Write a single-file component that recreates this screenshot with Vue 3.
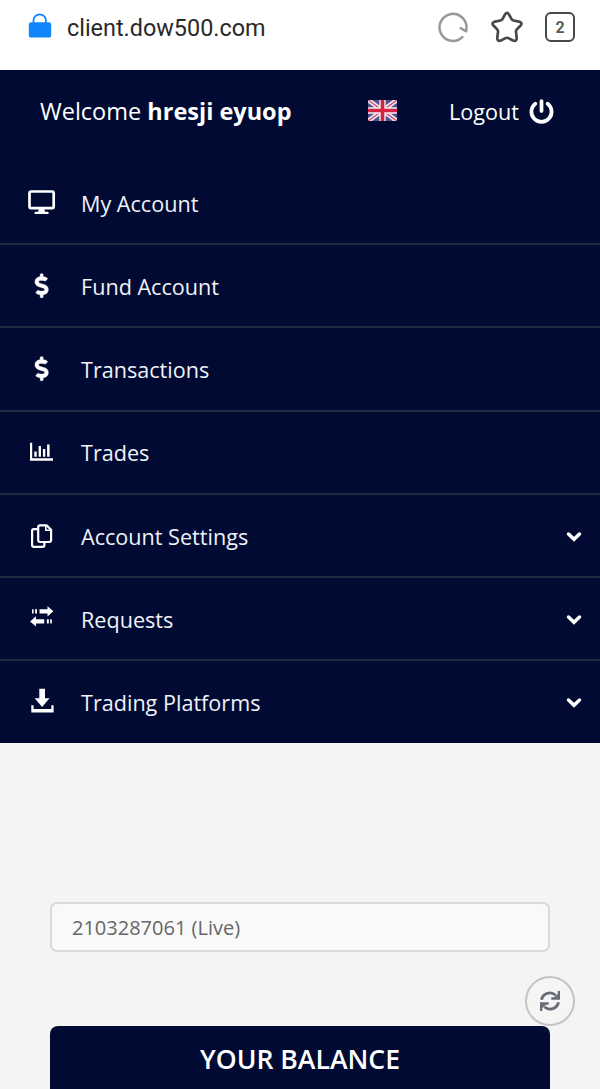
<template>
  <div class="page">
    <!-- browser bar -->
    <div class="browser-bar">
      <svg class="lock" viewBox="0 0 24 26">
        <path d="M5.5 11V7.5a6.2 6.2 0 0 1 12.4 0V11" fill="none" stroke="#0f87fb" stroke-width="1.8" />
        <rect x="0.8" y="9.3" width="22.4" height="15.2" rx="2.6" fill="#0f87fb" />
      </svg>
      <span class="url">client.dow500.com</span>
      <div class="browser-icons">
        <svg class="reload" viewBox="0 0 32 32" fill="none" stroke="#999" stroke-width="2.5" stroke-linecap="round">
          <path d="M25.4 26.1A13.5 13.5 0 1 1 29.5 17L29.2 20.3L23.6 17.2" stroke-linejoin="round" />
        </svg>
        <svg class="star" viewBox="0 0 32 32" fill="none" stroke="#484848" stroke-width="2.7" stroke-linejoin="round">
          <path d="M14.2 3.2Q16 0.4 17.8 3.2L20.4 7.9Q21.1 9.2 22.6 9.5L28 10.6Q32 11.7 29.4 14.7L25.8 18.4Q24.8 19.5 25 21L25.7 26.6Q26 31 22.1 29.5L17.4 27.1Q16 26.4 14.6 27.1L9.9 29.5Q6 31 6.3 26.6L7 21Q7.2 19.5 6.2 18.4L2.6 14.7Q0 11.7 4 10.6L9.4 9.5Q10.9 9.2 11.6 7.9Z" />
        </svg>
        <span class="tab-count">2</span>
      </div>
    </div>

    <!-- header and menu -->
    <header class="header">
      <p class="welcome">Welcome <strong>{{ userName }}</strong></p>
      <svg class="flag" viewBox="0 0 29 21">
        <rect width="29" height="21" fill="#50508e" />
        <path d="M0 0L29 21M29 0L0 21" stroke="#f2eaf5" stroke-width="4.6" />
        <path d="M0 0L29 21M29 0L0 21" stroke="#ce4a68" stroke-width="1.4" />
        <path d="M14.5 0V21M0 10.5H29" stroke="#f7edf3" stroke-width="6.4" />
        <path d="M14.5 0V21M0 10.5H29" stroke="#d32340" stroke-width="3.6" />
      </svg>
      <a class="logout">
        <span>Logout</span>
        <svg viewBox="0 0 24 24" fill="none" stroke="#fff" stroke-width="3.6" stroke-linecap="round">
          <path d="M6.1 4.5A9.7 9.7 0 1 0 17.9 4.5" />
          <path d="M12 2V11.5" />
        </svg>
      </a>
    </header>

    <nav class="menu">
      <a v-for="item in menuItems" :key="item.label" class="menu-item">
        <svg class="menu-icon" viewBox="0 0 30 30" fill="#fff">
          <g v-if="item.icon === 'desktop'">
            <rect x="2.5" y="3.5" width="24.2" height="16.6" rx="1.6" fill="none" stroke="#fff" stroke-width="2.7" />
            <path d="M12 20.6H17.2L18 23.7H20.5A1.2 1.2 0 0 1 20.5 26.1H8.7A1.2 1.2 0 0 1 8.7 23.7H11.2Z" />
          </g>
          <g v-else-if="item.icon === 'dollar'" transform="translate(7.9 2.7) scale(0.0469)">
            <path stroke="#fff" stroke-width="8" d="M209.2 233.4l-108-31.6C88.7 198.2 80 186.5 80 173.5c0-16.3 13.2-29.5 29.5-29.5h66.3c12.2 0 24.2 3.7 34.2 10.5 6.1 4.1 14.3 3.1 19.5-2l34.8-34c7.1-6.9 6.1-18.4-1.8-24.5C238 74.8 207.4 64.1 176 64V16c0-8.8-7.2-16-16-16h-32c-8.8 0-16 7.2-16 16v48h-2.5C45.8 64-5.4 118.7.5 183.6c4.2 46.1 39.4 83.6 83.8 96.6l102.5 30c12.5 3.7 21.2 15.3 21.2 28.3 0 16.3-13.2 29.5-29.5 29.5h-66.3C100 368 88 364.3 78 357.5c-6.1-4.1-14.3-3.1-19.5 2l-34.8 34c-7.1 6.9-6.1 18.4 1.8 24.5 24.5 19.2 55.1 29.9 86.5 30v48c0 8.8 7.2 16 16 16h32c8.8 0 16-7.2 16-16v-48.2c46.6-.9 90.3-28.6 105.7-72.7 21.5-61.6-14.6-124.8-72.5-141.7z" />
          </g>
          <g v-else-if="item.icon === 'chart'">
            <path d="M3 5.8H5.2V21.3H26V23.7H3Z" />
            <path d="M7.3 14.6h2.4v5.1H7.3zM11.6 8.9H14v10.8h-2.4zM15.9 12.1h2.4v7.6h-2.4zM20.1 7.6h2.5v12.1h-2.5z" />
          </g>
          <g v-else-if="item.icon === 'copy'" fill="none" stroke="#fff" stroke-width="2.2" stroke-linejoin="round">
            <path d="M10.6 8.2H6.8Q5.1 8.2 5.1 9.9V24.1Q5.1 25.9 6.8 25.9H15.6Q17.4 25.9 17.4 24.1V21.2" />
            <path d="M13 4.3H19.5L24.1 8.8V19.1Q24.1 21 22.3 21H13Q11.2 21 11.2 19.1V6.1Q11.2 4.3 13 4.3Z" />
            <path d="M18.8 4.4V9.2H24" stroke-width="1.6" />
          </g>
          <g v-else-if="item.icon === 'arrows'">
            <path d="M5 5.2h1.6v4.2H5zM8.1 5.2H10v4.2H8.1zM12.5 5.2H20.5V2.2L26.4 7.3L20.5 12.4V9.4H12.5Z" />
            <path d="M24.8 15.3h-1.6v4.2h1.6zM21.8 15.3h-1.9v4.2h1.9zM17.2 15.3H9V12.3L3.1 17.4L9 22.5V19.5H17.2Z" />
          </g>
          <g v-else>
            <path d="M12.3 1.8H18V11.2H22.5L15.1 19.9L7.7 11.2H12.3Z" />
            <path d="M4.3 18.2H6.6V21.9H24.3V18.2H26.6V25.4H4.3Z" />
          </g>
        </svg>
        <span class="menu-label">{{ item.label }}</span>
        <svg v-if="item.hasChildren" class="chevron" viewBox="0 0 16 12">
          <path d="M2.5 4L8 9.3L13.5 4" fill="none" stroke="#fff" stroke-width="3.5" stroke-linecap="round" />
        </svg>
      </a>
    </nav>

    <!-- account -->
    <main class="content">
      <div class="account-select">{{ account }}</div>
      <section class="balance">
        <h2>YOUR BALANCE</h2>
        <button class="refresh" type="button" aria-label="Refresh">
          <svg viewBox="0 0 20 20">
            <path d="M1.5 8.8A8.5 8.5 0 0 1 15.6 4.2M18.5 11.2A8.5 8.5 0 0 1 4.4 15.8" fill="none" stroke="#686c76" stroke-width="2.9" />
            <path d="M20 0V8.7H11.3V6.3H14L17.7 3V0ZM0 20V11.3H8.7V13.7H6L2.3 17V20Z" fill="#686c76" />
          </svg>
        </button>
      </section>
    </main>
  </div>
</template>

<script setup>
import { ref } from 'vue'

const userName = ref('hresji eyuop')
const account = ref('2103287061 (Live)')

const menuItems = [
  { label: 'My Account', icon: 'desktop' },
  { label: 'Fund Account', icon: 'dollar' },
  { label: 'Transactions', icon: 'dollar' },
  { label: 'Trades', icon: 'chart' },
  { label: 'Account Settings', icon: 'copy', hasChildren: true },
  { label: 'Requests', icon: 'arrows', hasChildren: true },
  { label: 'Trading Platforms', icon: 'download', hasChildren: true }
]
</script>

<style>
body {
  background-color: #f4f4f4;
}
</style>

<style scoped>
.page {
  height: 1089px;
  overflow: hidden;
  display: flex;
  flex-direction: column;
  font-family: "Open Sans", "Noto Sans", sans-serif;
  background-color: #f4f4f4;
}

.browser-bar {
  height: 70px;
  flex-shrink: 0;
  box-sizing: border-box;
  padding: 0 25px 16px 28px;
  display: flex;
  align-items: center;
  background-color: #fff;
}

.lock {
  width: 24px;
  height: 26px;
  margin-top: -2px;
}

.url {
  margin-left: 15px;
  font-family: Roboto, sans-serif;
  font-size: 23.4px;
  line-height: 30px;
  padding-top: 1px;
  color: #292929;
}

.browser-icons {
  margin-left: auto;
  display: flex;
  align-items: center;
  gap: 22px;
}

.reload,
.star {
  width: 32px;
  height: 32px;
}

.tab-count {
  width: 30px;
  height: 30px;
  box-sizing: border-box;
  border: 2.5px solid #484848;
  border-radius: 6px;
  text-align: center;
  font-family: Roboto, sans-serif;
  font-size: 16px;
  font-weight: 700;
  line-height: 27px;
  color: #5c5c5c;
}

.header {
  height: 92px;
  flex-shrink: 0;
  box-sizing: border-box;
  padding: 0 46px 10px 40px;
  display: flex;
  align-items: center;
  color: #fff;
  background-color: #000a32;
}

.welcome {
  width: 328px;
  margin: 0;
  font-size: 23.5px;
  white-space: nowrap;
}

.flag {
  width: 29px;
  height: 21px;
  margin-top: -2px;
}

.logout {
  margin-left: auto;
  display: flex;
  align-items: center;
  gap: 10px;
  font-size: 21.6px;
}

.logout svg {
  width: 25px;
  height: 25px;
}

.menu {
  flex-shrink: 0;
  display: grid;
  grid-template-rows: 83px repeat(5, 83.3px) 81.5px;
  background-color: #000a32;
}

.menu-item {
  padding: 0 18px 0 27px;
  display: flex;
  align-items: center;
  color: #f0f2f8;
  border-bottom: 2px solid #202941;
}

.menu-item:last-child {
  border-bottom: none;
}

.menu-icon {
  width: 30px;
  height: 30px;
}

.menu-label {
  margin-left: 24px;
  padding-top: 1px;
  font-size: 21.6px;
}

.chevron {
  width: 16px;
  height: 12px;
  margin-left: auto;
}

.content {
  padding: 159px 50px 0;
}

.account-select {
  height: 50px;
  box-sizing: border-box;
  padding: 0 20px;
  border: 2px solid #dadada;
  border-radius: 7px;
  font-size: 20px;
  line-height: 47px;
  color: #666;
  background-color: #f9f9f9;
}

.balance {
  position: relative;
  height: 80px;
  margin-top: 74.5px;
  border-radius: 8px 8px 0 0;
  background-color: #000a32;
}

.balance h2 {
  margin: 0;
  text-align: center;
  font-size: 26.6px;
  font-weight: 600;
  line-height: 66px;
  color: #fff;
}

.refresh {
  position: absolute;
  top: -50px;
  right: -25px;
  width: 50px;
  height: 50px;
  padding: 0;
  display: flex;
  justify-content: center;
  align-items: center;
  border: 2px solid #c4c4c4;
  border-radius: 50%;
  background-color: #f5f5f5;
}

.refresh svg {
  width: 20px;
  height: 20px;
}
</style>
